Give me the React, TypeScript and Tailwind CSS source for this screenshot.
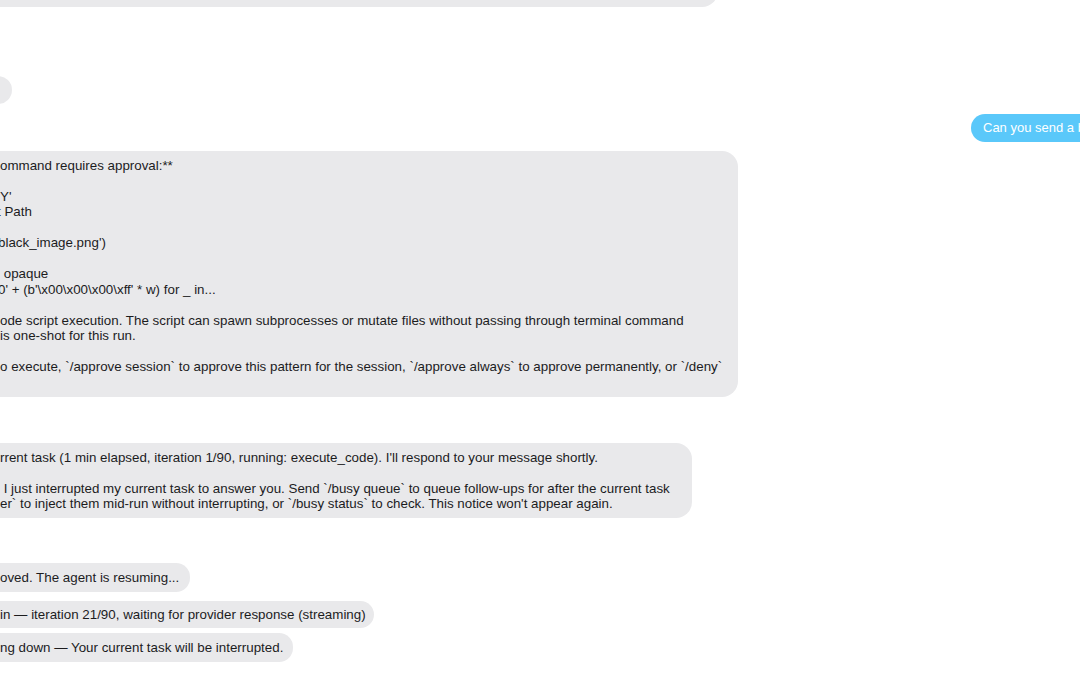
import React from "react";

const Line = ({ children, className = "" }: { children?: React.ReactNode; className?: string }) => (
  <div className={"whitespace-pre h-[15.5px] " + className}>{children}</div>
);

export default function App() {
  return (
    <div
      className="w-[1080px] h-[675px] overflow-hidden bg-white text-[13.35px] leading-[15.5px] text-[#1c1c1e]"
      style={{ fontFamily: '"Liberation Sans", Arial, sans-serif' }}
    >
      <div className="-ml-[40px] w-[1240px] -mt-[33px] flex flex-col items-start">
        {/* top bubble (mostly scrolled off) */}
        <div className="h-[40px] w-[758px] rounded-[16px] bg-[#e9e9eb]" />

        {/* small bubble clipped at left */}
        <div className="mt-[69px] h-[28px] w-[52px] rounded-[14px] bg-[#e9e9eb]" />

        {/* outgoing blue bubble */}
        <div className="mt-[10px] ml-[1011px] rounded-[14px] bg-[#5ac8fa] px-[12px] py-[6px] text-[13px] text-white whitespace-nowrap">
          Can you send a black image?
        </div>

        {/* approval bubble */}
        <div className="mt-[9px] w-[778px] rounded-[16px] bg-[#e9e9eb] py-[7px] pl-[40px] pr-[12px]">
          <Line>ommand requires approval:**</Line>
          <Line />
          <Line>Y'</Line>
          <Line className="-ml-[3px]">t Path</Line>
          <Line />
          <Line className="-ml-[2px]">black_image.png')</Line>
          <Line />
          <Line> opaque</Line>
          <Line className="-ml-[2px]">0' + (b'\x00\x00\x00\xff' * w) for _ in...</Line>
          <Line />
          <Line>ode script execution. The script can spawn subprocesses or mutate files without passing through terminal command</Line>
          <Line>is one-shot for this run.</Line>
          <Line />
          <Line>o execute, `/approve session` to approve this pattern for the session, `/approve always` to approve permanently, or `/deny`</Line>
          <Line />
        </div>

        {/* busy notice */}
        <div className="mt-[46px] w-[732px] rounded-[16px] bg-[#e9e9eb] py-[6.5px] pl-[40px] pr-[12px]">
          <Line>rrent task (1 min elapsed, iteration 1/90, running: execute_code). I'll respond to your message shortly.</Line>
          <Line />
          <Line> I just interrupted my current task to answer you. Send `/busy queue` to queue follow-ups for after the current task</Line>
          <Line>er` to inject them mid-run without interrupting, or `/busy status` to check. This notice won't appear again.</Line>
        </div>

        <div className="mt-[45px] w-[230px] rounded-[14px] bg-[#e9e9eb] py-[6.5px] pl-[40px] pr-[12px]">
          <Line>oved. The agent is resuming...</Line>
        </div>

        <div className="mt-[9px] w-[414px] rounded-[14px] bg-[#e9e9eb] py-[6px] pl-[40px] pr-[12px]">
          <Line>in — iteration 21/90, waiting for provider response (streaming)</Line>
        </div>

        <div className="mt-[5px] w-[333px] rounded-[14px] bg-[#e9e9eb] py-[6.5px] pl-[40px] pr-[12px]">
          <Line>ng down — Your current task will be interrupted.</Line>
        </div>
      </div>
    </div>
  );
}
